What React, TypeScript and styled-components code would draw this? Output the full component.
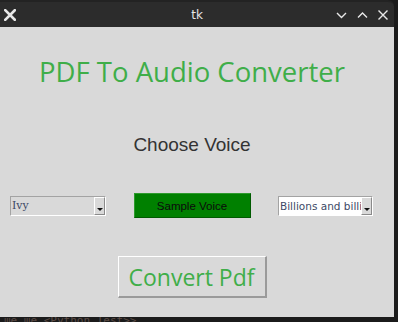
import React from "react";
import styled, { createGlobalStyle } from "styled-components";

const Global = createGlobalStyle`
  html, body {
    margin: 0;
    padding: 0;
    background: #1b1b1b;
    overflow: hidden;
  }
`;

const Screen = styled.div`
  width: 398px;
  height: 322px;
  display: flex;
  flex-direction: column;
  background: #1b1b1b;
`;

const Window = styled.div`
  width: 394px;
  display: flex;
  flex-direction: column;
`;

const TitleBar = styled.div`
  height: 27px;
  background: #2c2c2c;
  border-top: 2px solid #232323;
  border-top-right-radius: 6px;
  box-sizing: border-box;
  display: grid;
  grid-template-columns: 70px 1fr 70px;
  align-items: center;
  color: #e6e6e6;
  font-family: "DejaVu Sans", sans-serif;
  font-size: 12px;
`;

const Title = styled.div`
  text-align: center;
`;

const IconGroup = styled.div<{ $end?: boolean }>`
  display: flex;
  justify-content: ${({ $end }) => ($end ? "flex-end" : "flex-start")};
  align-items: center;
  gap: 10px;
  padding: ${({ $end }) => ($end ? "0 6px 0 0" : "0 0 0 4px")};
`;

const Content = styled.div`
  height: 290px;
  background: #d9d9d9;
  display: flex;
  flex-direction: column;
  align-items: center;
  padding-right: 10px;
  box-sizing: border-box;
`;

const Heading = styled.div`
  margin-top: 26px;
  font-family: "Open Sans", "Noto Sans", sans-serif;
  font-size: 27.5px;
  line-height: 38px;
  color: #3fae49;
`;

const Label = styled.div`
  margin-top: 43px;
  font-family: "Liberation Sans", Arial, sans-serif;
  font-size: 19px;
  line-height: 22px;
  color: #333333;
`;

const Row = styled.div`
  margin-top: 37px;
  align-self: stretch;
  display: flex;
  align-items: center;
  justify-content: space-between;
  padding: 0 11px 0 10px;
`;

const Combo = styled.div<{ $w: number }>`
  width: ${({ $w }) => $w}px;
  height: 20px;
  box-sizing: border-box;
  border: 1px solid #a3a3a3;
  border-right-color: #ffffff;
  border-bottom-color: #ffffff;
  background: #d9d9d9;
  display: flex;
  align-items: stretch;
`;

const ComboText = styled.div<{ $serif?: boolean }>`
  flex: 1;
  overflow: hidden;
  white-space: nowrap;
  padding-left: 1px;
  font-family: ${({ $serif }) =>
    $serif ? '"DejaVu Serif", serif' : '"DejaVu Sans", sans-serif'};
  font-size: ${({ $serif }) => ($serif ? "11px" : "10.5px")};
  line-height: 18px;
  color: #3d4a66;
  background: ${({ $serif }) => ($serif ? "#d9d9d9" : "#ffffff")};
`;

const ComboArrow = styled.div`
  width: 11px;
  box-sizing: border-box;
  border: 1px solid #ffffff;
  border-right-color: #8a8a8a;
  border-bottom-color: #8a8a8a;
  display: flex;
  align-items: flex-end;
  justify-content: center;
  padding-bottom: 3px;
  &::after {
    content: "";
    border-left: 3px solid transparent;
    border-right: 3px solid transparent;
    border-top: 3px solid #111;
  }
`;

const SampleButton = styled.button`
  width: 117px;
  height: 25px;
  background: #008000;
  border: 1px solid #2d9a2d;
  border-right-color: #005a00;
  border-bottom-color: #005a00;
  font-family: "Liberation Sans", Arial, sans-serif;
  font-size: 11.5px;
  color: #0b0b0b;
  padding: 0;
`;

const ConvertButton = styled.button`
  margin-top: 38px;
  width: 149px;
  height: 42px;
  background: #d9d9d9;
  border: 1px solid #ffffff;
  border-right: 2px solid #9a9a9a;
  border-bottom: 2px solid #9a9a9a;
  font-family: "Open Sans", "Noto Sans", sans-serif;
  font-size: 23px;
  color: #3fae49;
  padding: 0;
`;

const Terminal = styled.div`
  flex: 1;
  padding-left: 4px;
  font-family: "DejaVu Sans Mono", monospace;
  font-size: 11px;
  line-height: 8px;
  color: #5a4a44;
  white-space: nowrap;
  overflow: hidden;
`;

const Cross = ({ size, w }: { size: number; w: number }) => (
  <svg width={size} height={size} viewBox="0 0 10 10">
    <path d="M1 1L9 9M9 1L1 9" stroke="#e8e8e8" strokeWidth={w} strokeLinecap="square" />
  </svg>
);

const Chevron = ({ up }: { up?: boolean }) => (
  <svg width={11} height={8} viewBox="0 0 11 8">
    <path
      d={up ? "M1 6.5L5.5 2L10 6.5" : "M1 2L5.5 6.5L10 2"}
      stroke="#e8e8e8"
      strokeWidth={1.4}
      fill="none"
    />
  </svg>
);

export default function App() {
  return (
    <Screen>
      <Global />
      <Window>
        <TitleBar>
          <IconGroup>
            <Cross size={12} w={2.2} />
          </IconGroup>
          <Title>tk</Title>
          <IconGroup $end>
            <Chevron />
            <Chevron up />
            <Cross size={10} w={1.4} />
          </IconGroup>
        </TitleBar>
        <Content>
          <Heading>PDF To Audio Converter</Heading>
          <Label>Choose Voice</Label>
          <Row>
            <Combo $w={96}>
              <ComboText $serif>Ivy</ComboText>
              <ComboArrow />
            </Combo>
            <SampleButton>Sample Voice</SampleButton>
            <Combo $w={95}>
              <ComboText>Billions and billions</ComboText>
              <ComboArrow />
            </Combo>
          </Row>
          <ConvertButton>Convert Pdf</ConvertButton>
        </Content>
      </Window>
      <Terminal>ше ше &lt;Python Test&gt;&gt;</Terminal>
    </Screen>
  );
}
